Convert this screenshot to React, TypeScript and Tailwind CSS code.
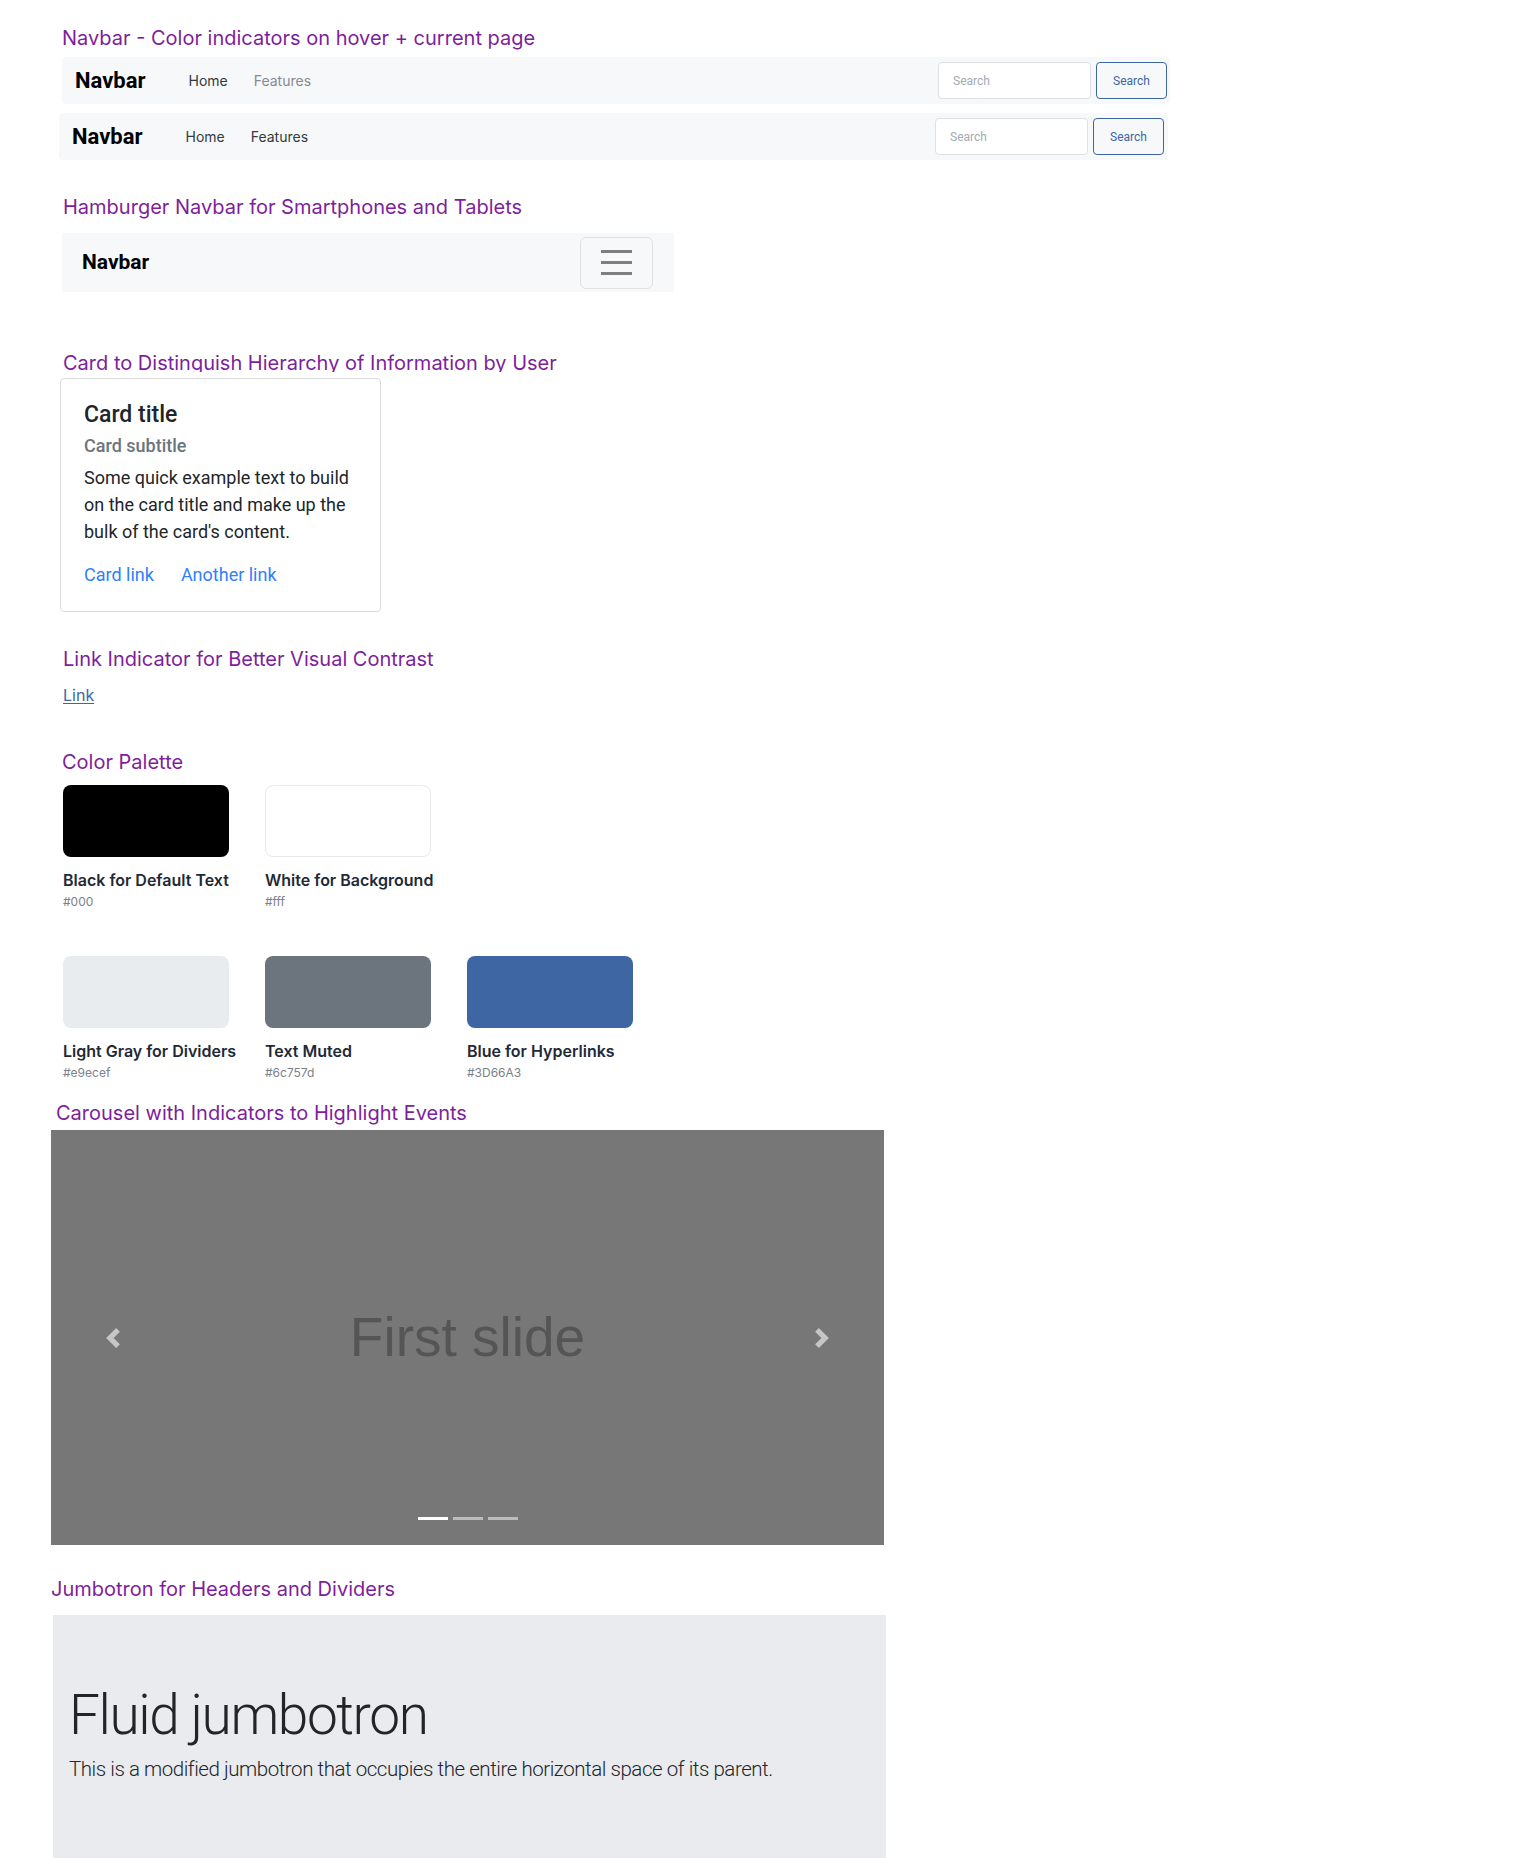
import React from "react"

// Style guide page: navbars, card, link, palette, carousel, jumbotron

const PURPLE = "text-[#7e1e9c]"

function SectionTitle({ children, className = "" }: { children: React.ReactNode; className?: string }) {
  return (
    <h2 className={`text-[20px] leading-[28px] font-normal ${PURPLE} ${className}`}>{children}</h2>
  )
}

function Navbar({ featuresMuted, className = "" }: { featuresMuted?: boolean; className?: string }) {
  return (
    <nav className={`flex items-center h-[47px] bg-[#f7f8fa] rounded-[4px] ${className}`}>
      <span className="font-['Roboto',sans-serif] font-bold text-[22px] text-black">Navbar</span>
      <div className="flex items-center gap-[26px] ml-[43px] text-[14px] font-['Inter',sans-serif]">
        <span className="text-[#343a40]">Home</span>
        <span className={featuresMuted ? "text-[#858b91]" : "text-[#343a40]"}>Features</span>
      </div>
      <div className="ml-auto flex items-center gap-[5px]">
        <div className="w-[153px] h-[37px] bg-white border border-[#dde1e6] rounded-[4px] flex items-center pl-[14px] text-[12px] text-[#a3aab3] font-['Roboto',sans-serif]">
          Search
        </div>
        <button className="w-[71px] h-[37px] border border-[#3D66A3] rounded-[4px] text-[12px] text-[#3D66A3] font-['Roboto',sans-serif]">
          Search
        </button>
      </div>
    </nav>
  )
}

const SWATCHES_TOP = [
  { name: "Black for Default Text", hex: "#000", cls: "bg-black" },
  { name: "White for Background", hex: "#fff", cls: "bg-white border border-[#e8e9ec]" },
]

const SWATCHES_BOTTOM = [
  { name: "Light Gray for Dividers", hex: "#e9ecef", cls: "bg-[#e9ecef]" },
  { name: "Text Muted", hex: "#6c757d", cls: "bg-[#6c757d]" },
  { name: "Blue for Hyperlinks", hex: "#3D66A3", cls: "bg-[#3D66A3]" },
]

function SwatchRow({ items, className = "" }: { items: { name: string; hex: string; cls: string }[]; className?: string }) {
  return (
    <div className={`flex gap-[36px] ml-[63px] ${className}`}>
      {items.map((s) => (
        <div key={s.hex} className="w-[166px]">
          <div className={`h-[72px] rounded-[8px] ${s.cls}`} />
          <div className="mt-[13px] text-[16px] leading-[20px] font-semibold text-[#1f2937] whitespace-nowrap">{s.name}</div>
          <div className="mt-[4px] text-[12px] leading-[16px] text-[#7b8089]">{s.hex}</div>
        </div>
      ))}
    </div>
  )
}

export default function App() {
  return (
    <div className="min-h-[1858px] bg-white font-['Inter',sans-serif] pt-[24px] overflow-hidden">
      {/* Navbars */}
      <SectionTitle className="ml-[62px]">Navbar - Color indicators on hover + current page</SectionTitle>
      <Navbar featuresMuted className="mt-[5px] ml-[62px] w-[1108px] pl-[13px] pr-[3px]" />
      <Navbar className="mt-[9px] ml-[59px] w-[1109px] pl-[13px] pr-[4px]" />

      {/* Hamburger */}
      <SectionTitle className="mt-[33px] ml-[63px]">Hamburger Navbar for Smartphones and Tablets</SectionTitle>
      <div className="mt-[12px] ml-[62px] w-[612px] h-[59px] bg-[#f7f8fa] flex items-center pl-[20px] pr-[21px]">
        <span className="font-['Roboto',sans-serif] font-bold text-[21px] text-black">Navbar</span>
        <button className="ml-auto w-[73px] h-[52px] border border-[#e0e1e3] rounded-[6px] flex flex-col items-center justify-center gap-[8px]">
          <span className="block w-[31px] h-[3px] bg-[#7f7f7f]" />
          <span className="block w-[31px] h-[3px] bg-[#7f7f7f]" />
          <span className="block w-[31px] h-[3px] bg-[#7f7f7f]" />
        </button>
      </div>

      {/* Card */}
      <div className="mt-[57px] ml-[63px] h-[23px] overflow-hidden">
        <SectionTitle>Card to Distinguish Hierarchy of Information by User</SectionTitle>
      </div>
      <div className="mt-[6px] ml-[60px] w-[321px] border border-[#dcdcdc] rounded-[4px] pl-[23px] pt-[22px] pb-[24px] font-['Roboto',sans-serif]">
        <div className="text-[23px] leading-[28px] font-medium text-[#212529]">Card title</div>
        <div className="mt-[5px] text-[18px] leading-[24px] font-medium text-[#6c757d]">Card subtitle</div>
        <p className="mt-[6px] text-[18px] leading-[27px] text-[#212529] whitespace-nowrap">
          Some quick example text to build
          <br />
          on the card title and make up the
          <br />
          bulk of the card's content.
        </p>
        <div className="mt-[18px] flex gap-[27px] text-[18px] leading-[24px] text-[#2f80fb]">
          <span>Card link</span>
          <span>Another link</span>
        </div>
      </div>

      {/* Link */}
      <SectionTitle className="mt-[33px] ml-[63px]">Link Indicator for Better Visual Contrast</SectionTitle>
      <div className="mt-[10px] ml-[63px] text-[16px] leading-[24px]">
        <a href="#" className="text-[#3D66A3] underline underline-offset-2">Link</a>
      </div>

      {/* Palette */}
      <SectionTitle className="mt-[41px] ml-[62px]">Color Palette</SectionTitle>
      <SwatchRow items={SWATCHES_TOP} className="mt-[9px]" />
      <SwatchRow items={SWATCHES_BOTTOM} className="mt-[46px]" />

      {/* Carousel */}
      <SectionTitle className="mt-[18px] ml-[56px]">Carousel with Indicators to Highlight Events</SectionTitle>
      <div className="relative mt-[3px] ml-[51px] w-[833px] h-[415px] bg-[#777777] flex items-center">
        <div className="w-[15%] flex justify-center">
          <svg viewBox="0 0 8 8" className="w-5 h-5" fill="#c6c6c6">
            <path d="M5.25 0l-4 4 4 4 1.5-1.5L4.25 4l2.5-2.5L5.25 0z" />
          </svg>
        </div>
        <div className="flex-1 text-center font-['Liberation_Sans',Arial,sans-serif] text-[55px] leading-none text-[#555555]">
          First slide
        </div>
        <div className="w-[15%] flex justify-center">
          <svg viewBox="0 0 8 8" className="w-5 h-5" fill="#c6c6c6">
            <path d="M2.75 0l-1.5 1.5L3.75 4l-2.5 2.5L2.75 8l4-4-4-4z" />
          </svg>
        </div>
        <div className="absolute bottom-[25px] left-0 right-0 flex justify-center gap-[5px]">
          <span className="block w-[30px] h-[3px] bg-white" />
          <span className="block w-[30px] h-[3px] bg-[#bbbbbb]" />
          <span className="block w-[30px] h-[3px] bg-[#bbbbbb]" />
        </div>
      </div>

      {/* Jumbotron */}
      <SectionTitle className="mt-[30px] ml-[51px]">Jumbotron for Headers and Dividers</SectionTitle>
      <div className="mt-[12px] ml-[53px] w-[833px] h-[260px] bg-[#e9ebef] pl-[16px] pt-[68px] font-['Roboto',sans-serif] text-[#212529]">
        <h1 className="text-[55px] leading-[64px] font-light tracking-[-1.4px]">Fluid jumbotron</h1>
        <p className="mt-[8px] text-[20.5px] leading-[28px] font-light tracking-[-0.45px]">
          This is a modified jumbotron that occupies the entire horizontal space of its parent.
        </p>
      </div>
    </div>
  )
}
